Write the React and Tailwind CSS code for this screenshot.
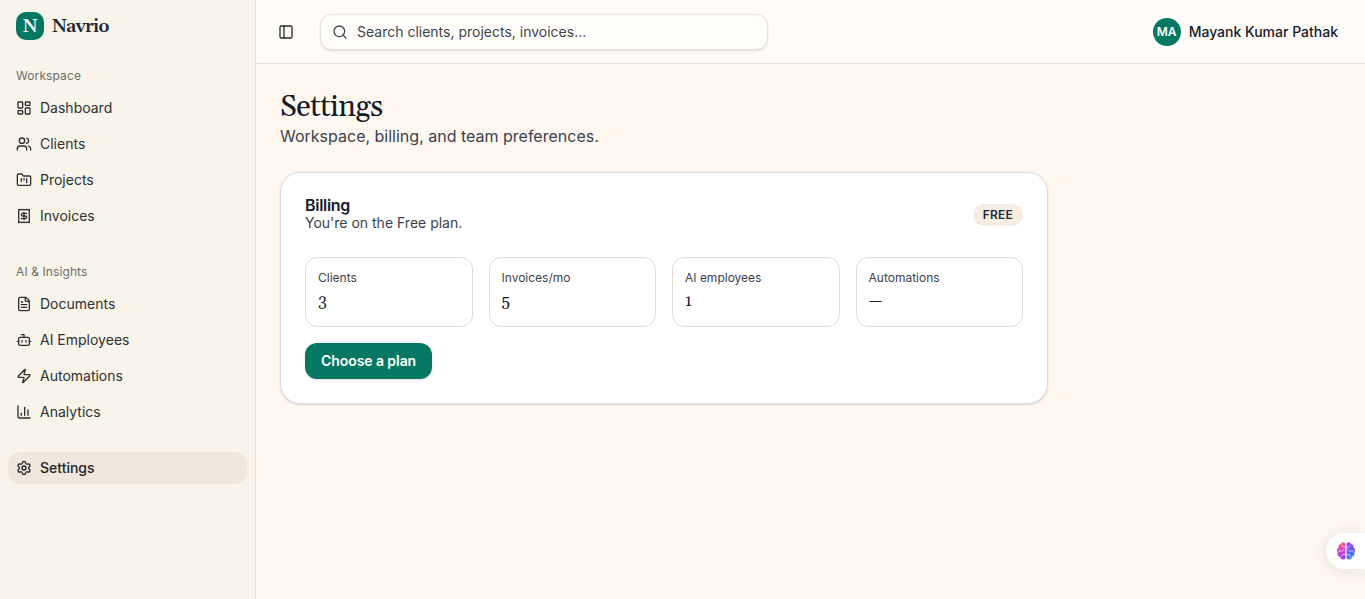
import {
  LayoutDashboard,
  Users,
  FolderKanban,
  FileText,
  Bot,
  Zap,
  ChartColumn,
  Settings,
  PanelLeft,
  Search,
} from 'lucide-react';

// Receipt with a dollar sign
const ReceiptIcon = ({ size = 16, strokeWidth = 2 }) => (
  <svg
    width={size}
    height={size}
    viewBox="0 0 24 24"
    fill="none"
    stroke="currentColor"
    strokeWidth={strokeWidth}
    strokeLinecap="round"
    strokeLinejoin="round"
  >
    <path d="M4 2v20l2-1 2 1 2-1 2 1 2-1 2 1 2-1 2 1V2l-2 1-2-1-2 1-2-1-2 1-2-1-2 1Z" />
    <path d="M16 8h-6a2 2 0 1 0 0 4h4a2 2 0 1 1 0 4H8" />
    <path d="M12 17.5v-11" />
  </svg>
);

const BrainIcon = () => (
  <svg width="20" height="20" viewBox="0 0 20 20" fill="none">
    <defs>
      <linearGradient id="brain-left" x1="2" y1="1" x2="9" y2="18" gradientUnits="userSpaceOnUse">
        <stop stopColor="#ff7a45" />
        <stop offset="0.4" stopColor="#e047c8" />
        <stop offset="1" stopColor="#9b3cf0" />
      </linearGradient>
      <linearGradient id="brain-right" x1="11" y1="1" x2="18" y2="18" gradientUnits="userSpaceOnUse">
        <stop stopColor="#b03df0" />
        <stop offset="0.5" stopColor="#6a55f5" />
        <stop offset="1" stopColor="#35a2f5" />
      </linearGradient>
    </defs>
    <path
      d="M9.4 2.2C8.2 0.6 5.6 0.8 4.8 3C2.9 3.2 2 5 2.5 6.5C0.8 7.6 0.4 10 1.6 11.5C0.9 13.4 2 15.3 3.8 15.7C4.5 18.6 7.9 19.5 9.4 17.4Z"
      fill="url(#brain-left)"
    />
    <path
      d="M10.6 2.2C11.8 0.6 14.4 0.8 15.2 3C17.1 3.2 18 5 17.5 6.5C19.2 7.6 19.6 10 18.4 11.5C19.1 13.4 18 15.3 16.2 15.7C15.5 18.6 12.1 19.5 10.6 17.4Z"
      fill="url(#brain-right)"
    />
    <g stroke="#fff" strokeOpacity="0.65" strokeWidth="0.9" strokeLinecap="round">
      <path d="M9.4 6H7.2L5.8 4.8M2.5 10h4.3l1-1.3M9.4 13.5H7L5.4 15" />
      <path d="M10.6 6h2.2l1.4-1.2M17.5 10h-4.3l-1-1.3M10.6 13.5H13l1.6 1.5" />
    </g>
  </svg>
);

const workspaceItems = [
  { label: 'Dashboard', icon: LayoutDashboard },
  { label: 'Clients', icon: Users },
  { label: 'Projects', icon: FolderKanban },
  { label: 'Invoices', icon: ReceiptIcon },
];

const insightItems = [
  { label: 'Documents', icon: FileText },
  { label: 'AI Employees', icon: Bot },
  { label: 'Automations', icon: Zap },
  { label: 'Analytics', icon: ChartColumn },
];

const limits = [
  { label: 'Clients', value: '3' },
  { label: 'Invoices/mo', value: '5' },
  { label: 'AI employees', value: '1' },
  { label: 'Automations', value: '—' },
];

const NavItem = ({ label, icon: Icon, active }) => (
  <a
    className={`flex h-8 items-center gap-2 rounded-xl px-2 text-sm ${
      active ? 'bg-[#efe7db] font-medium text-[#1f2225]' : 'text-[#2e3033]'
    }`}
  >
    <Icon size={16} strokeWidth={2} />
    <span>{label}</span>
  </a>
);

const NavGroup = ({ title, items }) => (
  <div>
    <div className="flex h-8 items-center px-2 text-xs tracking-[0.1px] text-[#6b6c6c]">{title}</div>
    <nav className="flex flex-col gap-1">
      {items.map((item) => (
        <NavItem key={item.label} {...item} />
      ))}
    </nav>
  </div>
);

const Sidebar = () => (
  <aside className="flex w-64 shrink-0 flex-col border-r border-[#e4dfd6] bg-[#f9f4e9] px-2">
    <div className="flex items-center gap-2 px-2 pt-3 pb-5">
      <div className="flex size-7 items-center justify-center rounded-[10px] bg-[#047862] pt-px font-['Georgia','Gelasio','Liberation_Serif',serif] text-lg leading-none font-semibold text-white">
        N
      </div>
      <span className="pt-0.5 font-['Georgia','Gelasio','Liberation_Serif',serif] text-lg leading-[26px] font-semibold tracking-[-0.6px] text-[#202733]">
        Navrio
      </span>
    </div>
    <div className="flex flex-col gap-6">
      <NavGroup title="Workspace" items={workspaceItems} />
      <NavGroup title="AI & Insights" items={insightItems} />
      <NavItem label="Settings" icon={Settings} active />
    </div>
  </aside>
);

const Header = () => (
  <header className="flex h-16 shrink-0 items-center justify-between border-b border-[#e0dcd7] bg-[#fffcf8] pr-[27px] pl-[22px]">
    <div className="flex items-center gap-[26px]">
      <PanelLeft size={16} className="text-[#292c30]" />
      <div className="flex h-9 w-[448px] items-center gap-[9px] rounded-xl border border-[#e8e3de] bg-[#fffdfa] pl-[11px] text-sm text-[#42464c] shadow-sm">
        <Search size={16} />
        <span>Search clients, projects, invoices...</span>
      </div>
    </div>
    <div className="flex items-center gap-2">
      <div className="flex size-7 items-center justify-center rounded-full bg-[#047862] text-xs font-semibold text-white">
        MA
      </div>
      <span className="text-sm font-medium text-[#161b28]">Mayank Kumar Pathak</span>
    </div>
  </header>
);

const BillingCard = () => (
  <section className="mt-6 max-w-3xl rounded-[20px] border border-[#dfdcd8] bg-white p-6 shadow-sm">
    <div className="flex items-center justify-between">
      <div>
        <h2 className="text-base leading-4 font-semibold tracking-[-0.3px] text-[#161b28]">Billing</h2>
        <p className="text-sm text-[#3b424e]">You're on the Free plan.</p>
      </div>
      <span className="rounded-full bg-[#f5ede2] px-2.5 py-[3px] text-xs font-semibold tracking-[0.2px] text-[#1f2937]">
        FREE
      </span>
    </div>
    <div className="mt-6 grid grid-cols-4 gap-4">
      {limits.map((limit) => (
        <div key={limit.label} className="rounded-xl border border-[#dfdcda] p-3">
          <div className="text-xs text-[#3b424e]">{limit.label}</div>
          <div className="mt-[3px] mb-px font-['Georgia','Gelasio','Liberation_Serif',serif] text-base text-[#161b28]">
            {limit.value}
          </div>
        </div>
      ))}
    </div>
    <button className="mt-4 flex h-9 items-center rounded-xl bg-[#047862] px-4 text-sm font-semibold tracking-[-0.07px] text-white shadow-sm">
      Choose a plan
    </button>
  </section>
);

const App = () => (
  <div className="relative flex h-screen overflow-hidden bg-[#fef8f1] font-['Inter',sans-serif]">
    <Sidebar />
    <div className="flex min-w-0 flex-1 flex-col">
      <Header />
      <main className="flex-1 p-6">
        <h1 className="pt-0.5 font-['Georgia','Gelasio','Liberation_Serif',serif] text-3xl leading-[34px] tracking-[-0.5px] text-[#161b28]">
          Settings
        </h1>
        <p className="text-base text-[#3b424e]">Workspace, billing, and team preferences.</p>
        <BillingCard />
      </main>
    </div>

    {/* Floating assistant launcher */}
    <button className="absolute top-[533px] right-0 flex h-9 w-[39px] items-center rounded-l-full bg-white pl-[10px] shadow-[0_2px_16px_rgba(0,0,0,0.1)]">
      <BrainIcon />
    </button>
  </div>
);

export default App;
